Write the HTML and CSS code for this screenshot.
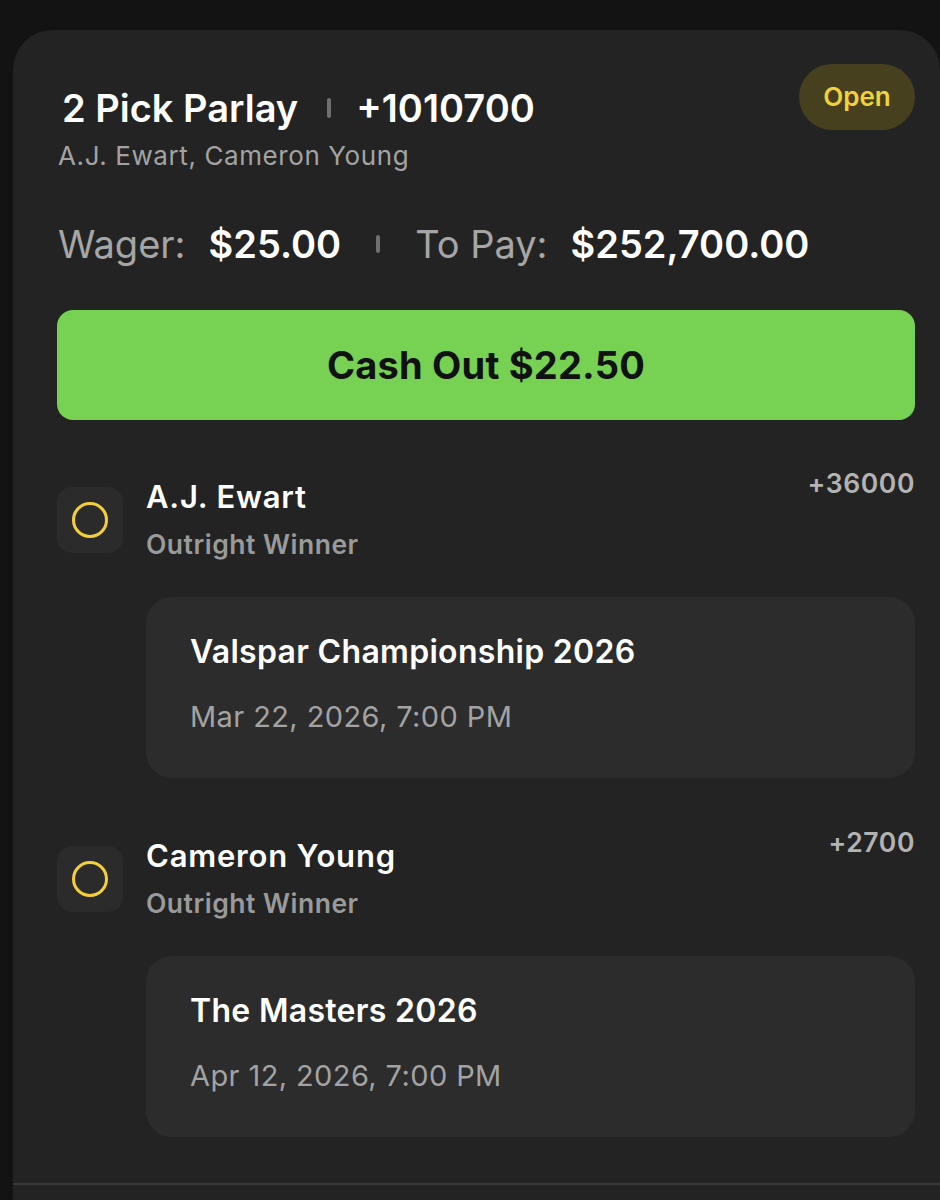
FILE: index.html
```html
<!DOCTYPE html>
<html lang="en">
<head>
<meta charset="utf-8">
<title>Parlay</title>
<link rel="stylesheet" href="styles.css">
</head>
<body>
<div class="card">
  <div class="head">
    <div class="head-main">
      <div class="title-row">
        <span class="title">2 Pick Parlay</span>
        <span class="sep sep-title"></span>
        <span class="title">+1010700</span>
      </div>
      <div class="subtitle">A.J. Ewart, Cameron Young</div>
    </div>
    <span class="status">Open</span>
  </div>

  <div class="wager-row">
    <span class="label">Wager:</span>
    <span class="amount">$25.00</span>
    <span class="sep sep-wager"></span>
    <span class="label">To Pay:</span>
    <span class="amount">$252,700.00</span>
  </div>

  <button class="cashout">Cash Out $22.50</button>

  <div class="leg">
    <div class="leg-head">
      <div class="leg-icon">
        <svg width="40" height="40" viewBox="0 0 40 40"><circle cx="20" cy="20" r="16.5" fill="none" stroke="#f2cf3b" stroke-width="3"/></svg>
      </div>
      <div class="leg-info">
        <div class="leg-name">A.J. Ewart</div>
        <div class="leg-market">Outright Winner</div>
      </div>
      <div class="leg-odds">+36000</div>
    </div>
    <div class="event">
      <div class="event-name">Valspar Championship 2026</div>
      <div class="event-date">Mar 22, 2026, 7:00 PM</div>
    </div>
  </div>

  <div class="leg">
    <div class="leg-head">
      <div class="leg-icon">
        <svg width="40" height="40" viewBox="0 0 40 40"><circle cx="20" cy="20" r="16.5" fill="none" stroke="#f2cf3b" stroke-width="3"/></svg>
      </div>
      <div class="leg-info">
        <div class="leg-name">Cameron Young</div>
        <div class="leg-market">Outright Winner</div>
      </div>
      <div class="leg-odds">+2700</div>
    </div>
    <div class="event">
      <div class="event-name">The Masters 2026</div>
      <div class="event-date">Apr 12, 2026, 7:00 PM</div>
    </div>
  </div>

  <div class="divider"></div>
</div>
</body>
</html>
```

FILE: styles.css
```css
* { box-sizing: border-box; }

html, body {
  margin: 0;
  padding: 0;
  background: #131313;
  height: 1200px;
  overflow: hidden;
}

body {
  font-family: Inter, "Noto Sans", sans-serif;
  color: #ffffff;
  padding-top: 30px;
  padding-left: 13px;
}

.card {
  width: 927px;
  min-height: 1200px;
  background: #232323;
  border-radius: 40px 40px 0 0;
  padding: 34px 25px 0 44px;
}

.head {
  display: flex;
  justify-content: space-between;
  align-items: flex-start;
}

.head-main {
  padding-top: 22px;
}

.title-row {
  display: flex;
  align-items: center;
  height: 44px;
  padding-left: 5px;
}

.title {
  font-size: 38px;
  font-weight: 600;
  line-height: 44px;
}

.sep {
  display: inline-block;
  width: 4px;
  border-radius: 2px;
  background: #6f6f6f;
}

.sep-title {
  height: 20px;
  margin: 0 25px 0 29px;
}

.subtitle {
  margin-top: 10px;
  font-size: 26px;
  line-height: 32px;
  color: #a3a3a3;
  letter-spacing: 0.6px;
  padding-left: 1px;
}

.status {
  width: 116px;
  height: 66px;
  border-radius: 33px;
  background: #47401f;
  color: #f2d23b;
  font-size: 26px;
  font-weight: 600;
  display: flex;
  align-items: center;
  justify-content: center;
  padding-bottom: 2px;
}

.wager-row {
  display: flex;
  align-items: center;
  margin-top: 49px;
  height: 46px;
  padding-left: 1px;
}

.label {
  font-size: 38px;
  line-height: 46px;
  color: #a6a6a6;
  margin-right: 23px;
}

.amount {
  font-size: 38px;
  line-height: 46px;
  font-weight: 600;
  color: #ffffff;
}

.sep-wager {
  height: 18px;
  margin: 0 35px;
}

.cashout {
  display: flex;
  align-items: center;
  justify-content: center;
  width: 858px;
  height: 110px;
  margin-top: 43px;
  border: none;
  border-radius: 16px;
  background: #77d152;
  color: #111111;
  font-family: Inter, "Noto Sans", sans-serif;
  font-size: 38px;
  font-weight: 700;
  letter-spacing: 0.2px;
  padding: 0;
}

.leg {
  margin-top: 47px;
}

.leg + .leg {
  margin-top: 48px;
}

.leg-head {
  display: flex;
  align-items: flex-start;
}

.leg-icon {
  width: 66px;
  height: 66px;
  margin-top: 20px;
  border-radius: 15px;
  background: #2b2b2b;
  display: flex;
  align-items: center;
  justify-content: center;
  flex: none;
}

.leg-info {
  flex: 1;
  padding-top: 12px;
  padding-left: 23px;
}

.leg-name {
  font-size: 31px;
  line-height: 36px;
  font-weight: 600;
  letter-spacing: 0.8px;
  color: #ffffff;
}

.leg-market {
  margin-top: 12px;
  font-size: 26.5px;
  line-height: 34px;
  font-weight: 600;
  letter-spacing: 0.5px;
  color: #9a9a9a;
}

.leg-odds {
  font-size: 26.5px;
  line-height: 32px;
  font-weight: 600;
  letter-spacing: 0.6px;
  color: #b3b3b3;
}

.event {
  margin-top: 36px;
  margin-left: 89px;
  background: #2c2c2c;
  border-radius: 26px;
  padding: 36px 44px 43px 44px;
}

.event-name {
  font-size: 32px;
  line-height: 38px;
  font-weight: 600;
  letter-spacing: 0.3px;
  color: #ffffff;
}

.event-date {
  margin-top: 28px;
  font-size: 29px;
  line-height: 36px;
  letter-spacing: 0.4px;
  color: #a3a3a3;
}

.divider {
  margin-top: 46px;
  margin-left: -44px;
  margin-right: -25px;
  height: 2px;
  background: #393939;
}
```
